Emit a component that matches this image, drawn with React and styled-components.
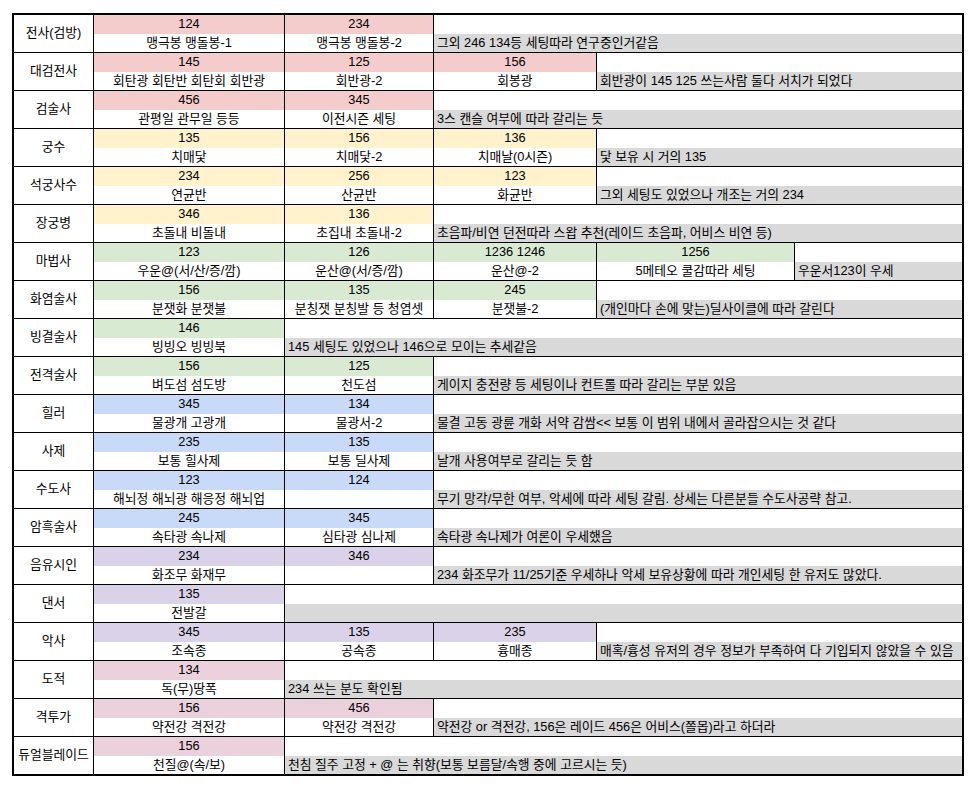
import React from 'react';
import styled, { createGlobalStyle } from 'styled-components';

const GlobalStyle = createGlobalStyle`
	body {
		margin: 0;
		background: #ffffff;
		font-family: 'Liberation Sans', 'Noto Sans CJK KR', sans-serif;
		color: #000000;
	}
`;

const COLORS = {
	warrior: '#f4cccc',
	archer: '#fff2cc',
	mage: '#d9ead3',
	healer: '#c9daf8',
	bard: '#d9d2e9',
	rogue: '#ead1dc',
};

const rows = [
	{ name: '전사(검방)', tone: 'warrior', settings: [['124', '맹극봉 맹돌봉-1'], ['234', '맹극봉 맹돌봉-2']], note: '그외 246 134등 세팅따라 연구중인거같음' },
	{ name: '대검전사', tone: 'warrior', settings: [['145', '회탄광 회탄반 회탄회 회반광'], ['125', '회반광-2'], ['156', '회봉광']], note: '회반광이 145 125 쓰는사람 둘다 서치가 되었다' },
	{ name: '검술사', tone: 'warrior', settings: [['456', '관평일 관무일 등등'], ['345', '이전시즌 세팅']], note: '3스 캔슬 여부에 따라 갈리는 듯' },
	{ name: '궁수', tone: 'archer', settings: [['135', '치매닻'], ['156', '치매닻-2'], ['136', '치매날(0시즌)']], note: '닻 보유 시 거의 135' },
	{ name: '석궁사수', tone: 'archer', settings: [['234', '연균반'], ['256', '산균반'], ['123', '화균반']], note: '그외 세팅도 있었으나 개조는 거의 234' },
	{ name: '장궁병', tone: 'archer', settings: [['346', '초돌내 비돌내'], ['136', '초집내 초돌내-2']], note: '초음파/비연 던전따라 스왑 추천(레이드 초음파, 어비스 비연 등)' },
	{ name: '마법사', tone: 'mage', settings: [['123', '우운@(서/산/증/깜)'], ['126', '운산@(서/증/깜)'], ['1236 1246', '운산@-2'], ['1256', '5메테오 쿨감따라 세팅']], note: '우운서123이 우세' },
	{ name: '화염술사', tone: 'mage', settings: [['156', '분잿화 분잿불'], ['135', '분칭잿 분칭발 등 청염셋'], ['245', '분잿불-2']], note: '(개인마다 손에 맞는)딜사이클에 따라 갈린다' },
	{ name: '빙결술사', tone: 'mage', settings: [['146', '빙빙오 빙빙북']], note: '145 세팅도 있었으나 146으로 모이는 추세같음' },
	{ name: '전격술사', tone: 'mage', settings: [['156', '벼도섬 섬도방'], ['125', '천도섬']], note: '게이지 충전량 등 세팅이나 컨트롤 따라 갈리는 부분 있음' },
	{ name: '힐러', tone: 'healer', settings: [['345', '물광개 고광개'], ['134', '물광서-2']], note: '물결 고동 광륜 개화 서약 감쌈<< 보통 이 범위 내에서 골라잡으시는 것 같다' },
	{ name: '사제', tone: 'healer', settings: [['235', '보통 힐사제'], ['135', '보통 딜사제']], note: '날개 사용여부로 갈리는 듯 함' },
	{ name: '수도사', tone: 'healer', settings: [['123', '해뇌정 해뇌광 해응정 해뇌업'], ['124', '']], note: '무기 망각/무한 여부, 악세에 따라 세팅 갈림. 상세는 다른분들 수도사공략 참고.' },
	{ name: '암흑술사', tone: 'healer', settings: [['245', '속타광 속나제'], ['345', '심타광 심나제']], note: '속타광 속나제가 여론이 우세했음' },
	{ name: '음유시인', tone: 'bard', settings: [['234', '화조무 화재무'], ['346', '']], note: '234 화조무가 11/25기준 우세하나 악세 보유상황에 따라 개인세팅 한 유저도 많았다.' },
	{ name: '댄서', tone: 'bard', settings: [['135', '전발갈']], note: '' },
	{ name: '악사', tone: 'bard', settings: [['345', '조속종'], ['135', '공속종'], ['235', '흉매종']], note: '매혹/흉성 유저의 경우 정보가 부족하여 다 기입되지 않았을 수 있음' },
	{ name: '도적', tone: 'rogue', settings: [['134', '독(무)땅폭']], note: '234 쓰는 분도 확인됨' },
	{ name: '격투가', tone: 'rogue', settings: [['156', '약전강 격전강'], ['456', '약전강 격전강']], note: '약전강 or 격전강, 156은 레이드 456은 어비스(쫄몹)라고 하더라' },
	{ name: '듀얼블레이드', tone: 'rogue', settings: [['156', '천질@(속/보)']], note: '천침 질주 고정 + @ 는 취향(보통 보름달/속행 중에 고르시는 듯)' },
];

const Sheet = styled.div`
	margin: 13px 0 0 12px;
	width: 952px;
	box-sizing: border-box;
	border: 2px solid #000;
	font-size: 12.8px;
	line-height: 1;
`;

const Group = styled.div`
	display: grid;
	grid-template-columns: 80px 191px 149px 163px 198px 1fr;
	grid-template-rows: 19px 18px;
	border-bottom: 1px solid #000;
	&:last-child {
		border-bottom: none;
	}
`;

const ClassName = styled.div`
	grid-row: 1 / 3;
	display: flex;
	align-items: center;
	justify-content: center;
	border-right: 1px solid #000;
	white-space: nowrap;
`;

const Setting = styled.div`
	grid-row: 1 / 3;
	display: grid;
	grid-template-rows: 19px 18px;
	border-right: 1px solid #000;
`;

const Num = styled.div`
	background: ${(props) => props.$tone};
	display: flex;
	align-items: center;
	justify-content: center;
	white-space: nowrap;
`;

const Label = styled.div`
	display: flex;
	align-items: center;
	justify-content: center;
	white-space: nowrap;
`;

const Note = styled.div`
	grid-row: 1 / 3;
	grid-column: ${(props) => props.$start} / -1;
	display: grid;
	grid-template-rows: 19px 18px;
`;

const NoteText = styled.div`
	grid-row: 2;
	background: #d9d9d9;
	display: flex;
	align-items: center;
	padding-left: 3px;
	white-space: nowrap;
	overflow: hidden;
`;

const App = () => {
	return (
		<>
			<GlobalStyle />
			<Sheet>
				{rows.map((row) => (
					<Group key={row.name}>
						<ClassName>{row.name}</ClassName>
						{row.settings.map(([n, label], i) => (
							<Setting key={i}>
								<Num $tone={COLORS[row.tone]}>{n}</Num>
								<Label>{label}</Label>
							</Setting>
						))}
						<Note $start={row.settings.length + 2}>
							<NoteText>{row.note}</NoteText>
						</Note>
					</Group>
				))}
			</Sheet>
		</>
	);
};

export default App;
